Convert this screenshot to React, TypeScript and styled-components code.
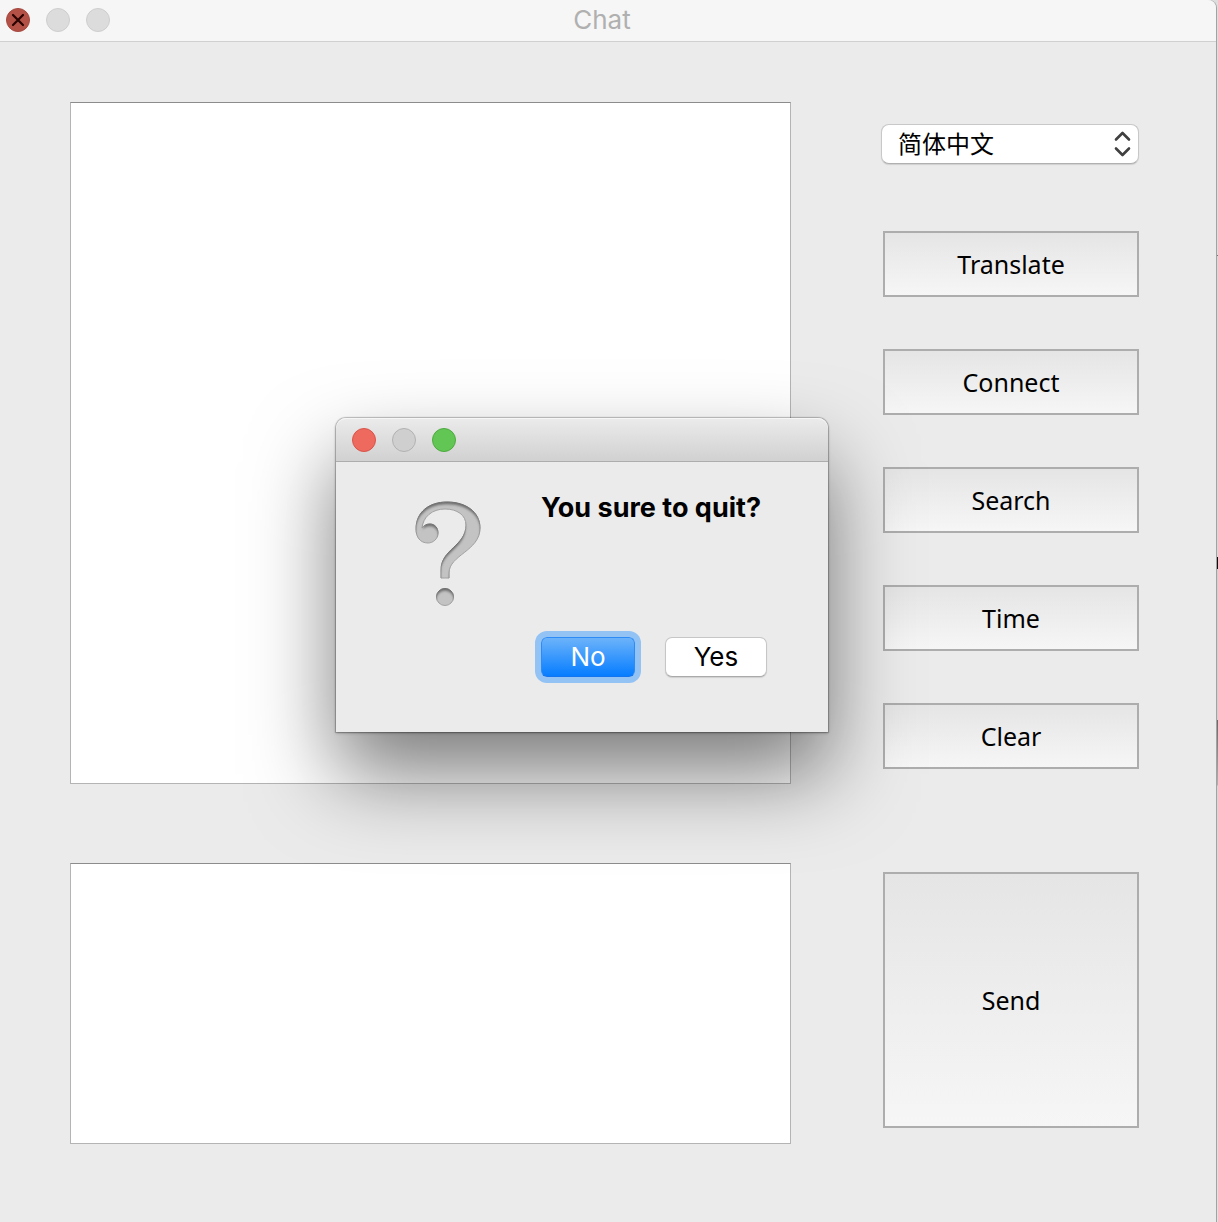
import React from "react";
import styled, { createGlobalStyle } from "styled-components";

const systemFont = `Inter, Roboto, "Noto Sans CJK SC", sans-serif`;
const buttonFont = `"Noto Sans", "Open Sans", sans-serif`;

const GlobalStyle = createGlobalStyle`
  *, *::before, *::after { box-sizing: border-box; }
  body { margin: 0; font-family: ${systemFont}; color: #000; }
  button, select, textarea { font: inherit; color: inherit; margin: 0; }
`;

const Desktop = styled.div`
  min-height: 100vh;
  display: flex;
  padding-right: 2px;
  background: linear-gradient(
    #dedede 255px, #777 255px, #777 256px, #d8d8d8 256px, #d8d8d8 557px,
    #101010 557px, #101010 569px, #d0d0d0 569px, #d0d0d0 720px,
    #686868 720px, #b0b0b0 785px, #d6d6d6 786px, #e2e2e2
  );
`;

const Window = styled.main`
  position: relative;
  flex: 1;
  min-width: 0;
  display: flex;
  flex-direction: column;
  background: #ebebeb;
  border-top-right-radius: 8px;
  box-shadow: 1px 0 0 #a2a2a2;
`;

const TitleBar = styled.header`
  height: 42px;
  display: grid;
  grid-template-columns: 1fr auto 1fr;
  align-items: center;
  padding: 0 18px 1px 6px;
  background: #f6f6f6;
  border-bottom: 1px solid #d0d0d0;
  border-top-right-radius: 8px;
`;

const Title = styled.h1`
  margin: 0;
  font-size: 26px;
  line-height: 40px;
  font-weight: 400;
  color: #b0b0b0;
`;

const Lights = styled.div`
  display: flex;
  gap: 16px;
`;

const Light = styled.button<{ $fill: string; $edge: string }>`
  width: 24px;
  height: 24px;
  padding: 0;
  display: grid;
  place-items: center;
  border: 1px solid ${(p) => p.$edge};
  border-radius: 50%;
  background: ${(p) => p.$fill};
`;

const Workspace = styled.div`
  flex: 1;
  display: grid;
  grid-template-columns: minmax(0, 1fr) 258px;
  grid-template-rows: minmax(681px, 17fr) minmax(281px, 7fr);
  gap: 79px 90px;
  padding: 60px 77px 79px 70px;
`;

const TextPane = styled.textarea`
  width: 100%;
  height: 100%;
  padding: 8px;
  font-size: 24px;
  resize: none;
  outline: none;
  border: 1px solid #b4b4b4;
  border-top-color: #8c8c8c;
  border-radius: 0;
  background: #fff;
`;

const Controls = styled.div`
  display: flex;
  flex-direction: column;
  gap: 52px;
  padding-top: 22px;
`;

const SelectBox = styled.label`
  position: relative;
  display: block;
  margin-bottom: 15px;
`;

const LanguageSelect = styled.select`
  appearance: none;
  display: block;
  width: 100%;
  height: 40px;
  padding: 0 40px 2px 16px;
  font-family: "Noto Sans CJK SC", sans-serif;
  font-size: 24px;
  line-height: 36px;
  border: 1px solid #c8c8c8;
  border-bottom-color: #b0b0b0;
  border-radius: 8px;
  background: #fff;
  box-shadow: 0 1px 1px rgba(0, 0, 0, 0.12);
`;

const SelectArrows = styled.svg`
  position: absolute;
  top: 7px;
  right: 8px;
  pointer-events: none;
`;

const PushButton = styled.button<{ $tall?: boolean }>`
  height: ${(p) => (p.$tall ? 256 : 66)}px;
  margin-left: 2px;
  padding: 0;
  font-family: ${buttonFont};
  font-size: 25px;
  line-height: 32px;
  border: 2px solid #adadad;
  border-radius: 0;
  background: linear-gradient(#e5e5e5, #f6f6f6);
`;

const SendArea = styled.div`
  display: flex;
  flex-direction: column;
  padding-top: 9px;
`;

const Dialog = styled.section`
  position: absolute;
  top: 418px;
  left: 336px;
  width: 492px;
  border-radius: 10px 10px 0 0;
  background: #ebebeb;
  box-shadow:
    0 0 1px 1px rgba(0, 0, 0, 0.22),
    0 1px 3px rgba(0, 0, 0, 0.3),
    0 42px 84px rgba(0, 0, 0, 0.52);
`;

const DialogBar = styled.div`
  height: 44px;
  display: flex;
  align-items: center;
  padding: 0 16px;
  border-bottom: 1px solid #adadad;
  border-radius: 10px 10px 0 0;
  background: linear-gradient(#ebebeb, #d1d1d1);
  box-shadow: inset 0 1px 0 #f6f6f6;
`;

const DialogBody = styled.div`
  display: flex;
  align-items: flex-start;
  gap: 60px;
  padding: 30px 50px 55px 79px;
`;

const QuestionMark = styled.svg`
  flex: none;
  margin-top: 8px;
`;

const DialogContent = styled.div`
  display: flex;
  flex-direction: column;
  gap: 113px;
`;

const Message = styled.h2`
  margin: 0;
  font-size: 27px;
  line-height: 32px;
  font-weight: 700;
  white-space: nowrap;
`;

const Actions = styled.div`
  display: flex;
  gap: 30px;
`;

const DialogButton = styled.button<{ $primary?: boolean }>`
  width: ${(p) => (p.$primary ? 94 : 102)}px;
  height: 40px;
  padding: 0;
  font-size: 26px;
  line-height: 36px;
  border-radius: ${(p) => (p.$primary ? 6 : 7)}px;
  border: 1px solid ${(p) => (p.$primary ? "#2d8bf5" : "#c6c6c6")};
  border-bottom-color: ${(p) => (p.$primary ? "#1473ee" : "#aaa")};
  color: ${(p) => (p.$primary ? "#fff" : "#000")};
  background: ${(p) => (p.$primary ? "linear-gradient(#6cb3fa, #067dff)" : "#fff")};
  box-shadow: ${(p) =>
    p.$primary ? "0 0 0 6px #93c2f5" : "0 1px 1px rgba(0, 0, 0, 0.12)"};
`;

const markPath =
  "M26 78 V70 C26 49 51 46 51 25 C51 15 42 9 30 9 C17 9 8 17 7 28 C9 25 12 24 15 24 C20 24 23 28 23 33 C23 39 18 43 13 43 C5 43 1 37 1 29 C1 12 14 2 32 2 C51 2 65 12 65 28 C65 51 34 55 34 73 V78 Z";

const commands = ["Translate", "Connect", "Search", "Time", "Clear"];

export default function App() {
  return (
    <Desktop>
      <GlobalStyle />
      <Window>
        <TitleBar>
          <Lights>
            <Light $fill="#b45147" $edge="#a5483f" aria-label="Close window">
              <svg width="14" height="14" viewBox="0 0 14 14" stroke="#290300" strokeWidth="2.2" strokeLinecap="round">
                <path d="M2 2 12 12M12 2 2 12" />
              </svg>
            </Light>
            <Light $fill="#dcdcdc" $edge="#cecece" aria-label="Minimize window" />
            <Light $fill="#dcdcdc" $edge="#cecece" aria-label="Zoom window" />
          </Lights>
          <Title>Chat</Title>
        </TitleBar>

        <Workspace>
          <TextPane aria-label="Conversation" readOnly />
          <Controls>
            <SelectBox>
              <LanguageSelect aria-label="Language">
                <option>简体中文</option>
              </LanguageSelect>
              <SelectArrows width="17" height="26" viewBox="0 0 17 26" fill="none" stroke="#404040" strokeWidth="2.6" strokeLinecap="round" strokeLinejoin="round">
                <path d="M2 8.5 8.5 2 15 8.5M2 17.5 8.5 24 15 17.5" />
              </SelectArrows>
            </SelectBox>
            {commands.map((name) => (
              <PushButton key={name}>{name}</PushButton>
            ))}
          </Controls>
          <TextPane aria-label="Message" />
          <SendArea>
            <PushButton $tall>Send</PushButton>
          </SendArea>
        </Workspace>

        <Dialog role="dialog" aria-labelledby="quit-message">
          <DialogBar>
            <Lights>
              <Light $fill="#ee6a5f" $edge="#d9544a" aria-label="Close dialog" />
              <Light $fill="#cfcfcf" $edge="#b2b2b2" aria-label="Minimize dialog" />
              <Light $fill="#62c655" $edge="#4dab3f" aria-label="Zoom dialog" />
            </Lights>
          </DialogBar>
          <DialogBody>
            <QuestionMark width="66" height="108" viewBox="0 0 66 108" aria-hidden="true">
              <defs>
                <filter id="bevel" x="-10%" y="-10%" width="120%" height="120%">
                  <feOffset in="SourceAlpha" dx="0" dy="3" result="shifted" />
                  <feGaussianBlur in="shifted" stdDeviation="1.2" result="soft" />
                  <feComposite in="SourceAlpha" in2="soft" operator="out" result="rim" />
                  <feFlood floodColor="#707070" />
                  <feComposite in2="rim" operator="in" result="shade" />
                  <feMerge>
                    <feMergeNode in="SourceGraphic" />
                    <feMergeNode in="shade" />
                  </feMerge>
                </filter>
              </defs>
              <g fill="#c3c3c3" stroke="#a2a2a2" strokeWidth="1" filter="url(#bevel)">
                <path d={markPath} />
                <circle cx="30" cy="97" r="8.5" />
              </g>
            </QuestionMark>
            <DialogContent>
              <Message id="quit-message">You sure to quit?</Message>
              <Actions>
                <DialogButton $primary>No</DialogButton>
                <DialogButton>Yes</DialogButton>
              </Actions>
            </DialogContent>
          </DialogBody>
        </Dialog>
      </Window>
    </Desktop>
  );
}
